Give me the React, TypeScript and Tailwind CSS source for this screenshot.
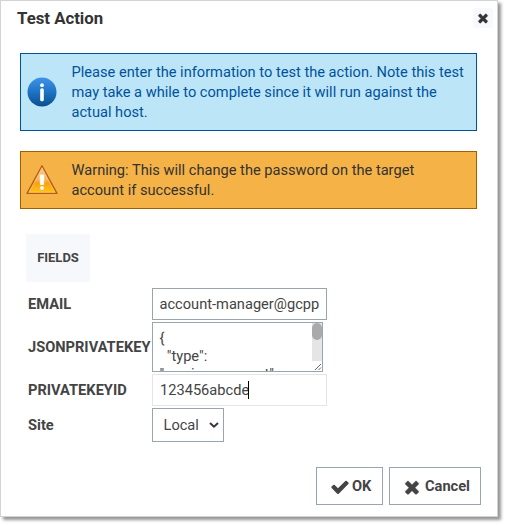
import React from "react";

const TimesIcon = ({ className }: { className: string }) => (
  <svg viewBox="0 0 1792 1792" fill="currentColor" stroke="currentColor" strokeWidth="40" className={className}>
    <path d="M1490 1322q0 40-28 68l-136 136q-28 28-68 28t-68-28l-294-294-294 294q-28 28-68 28t-68-28l-136-136q-28-28-28-68t28-68l294-294-294-294q-28-28-28-68t28-68l136-136q28-28 68-28t68 28l294 294 294-294q28-28 68-28t68 28l136 136q28 28 28 68t-28 68l-294 294 294 294q28 28 28 68z" />
  </svg>
);

const CheckIcon = ({ className }: { className: string }) => (
  <svg viewBox="0 0 1792 1792" fill="currentColor" className={className}>
    <path d="M1671 566q0 40-28 68l-724 724-136 136q-28 28-68 28t-68-28l-136-136-362-362q-28-28-28-68t28-68l136-136q28-28 68-28t68 28l294 295 656-657q28-28 68-28t68 28l136 136q28 28 28 68z" />
  </svg>
);

const InfoIcon = () => (
  <svg viewBox="0 0 30 30" className="size-[30px] shrink-0">
    <defs>
      <linearGradient id="info" x1="0" y1="0" x2="0" y2="1">
        <stop offset="0" stopColor="#3d94e8" />
        <stop offset="0.5" stopColor="#1f73c4" />
        <stop offset="1" stopColor="#0a4f8f" />
      </linearGradient>
    </defs>
    <circle cx="15" cy="15" r="14.5" fill="url(#info)" />
    <circle cx="15" cy="8.2" r="1.9" fill="#fff" />
    <rect x="13.2" y="11.3" width="3.6" height="13" rx="1.6" fill="#fff" />
  </svg>
);

const WarningIcon = () => (
  <svg viewBox="0 0 32 30" className="h-[30px] w-8 shrink-0">
    <defs>
      <linearGradient id="warn" x1="0" y1="0" x2="0" y2="1">
        <stop offset="0" stopColor="#f6c890" />
        <stop offset="0.5" stopColor="#f8b85a" />
        <stop offset="0.62" stopColor="#f9a010" />
        <stop offset="1" stopColor="#ffc61c" />
      </linearGradient>
    </defs>
    <path d="M16 0.8 L31 28.4 H1 Z" fill="url(#warn)" stroke="#b5591f" strokeWidth="1.3" strokeLinejoin="round" />
    <path d="M16 3.4 L28.8 27.2 H3.2 Z" fill="none" stroke="#fbd08a" strokeWidth="0.8" opacity="0.6" />
    <path d="M14.2 10 H17.8 L17.6 19.5 H14.4 Z" fill="#fff" stroke="#fff" strokeWidth="0.8" strokeLinejoin="round" />
    <circle cx="16" cy="23" r="1.9" fill="#fff" />
  </svg>
);

const Label = ({ children }: { children: React.ReactNode }) => (
  <label className="w-[124px] shrink-0 font-bold whitespace-nowrap">{children}</label>
);

export default function App() {
  return (
    <div className="h-[525px] w-[506px] overflow-hidden bg-white font-['Roboto',sans-serif] text-[14.64px] leading-5 text-[#444]">
      <section className="flex h-[517px] w-[498px] flex-col border border-[#d3d3d3] bg-white shadow-[3px_3px_3px_rgba(0,0,0,0.42)]">
        <header className="flex h-[52px] shrink-0 items-start justify-between pt-[7px] pr-[4px] pl-4">
          <h1 className="text-[16.8px] leading-[21px] font-bold text-[#333]">Test Action</h1>
          <button className="flex size-5 items-center justify-center rounded-xs bg-[#f8f9fc] text-[#333]">
            <TimesIcon className="size-[14px]" />
          </button>
        </header>

        <div className="ml-[19px] flex h-[78px] w-[457px] shrink-0 items-center border border-[#00529b] bg-[#bde5f8] pl-[6px] text-[#00529b]">
          <InfoIcon />
          <p className="ml-[14.5px] whitespace-nowrap">
            Please enter the information to test the action. Note this test
            <br />
            may take a while to complete since it will run against the
            <br />
            actual host.
          </p>
        </div>

        <div className="mt-5 ml-[19px] flex h-[58px] w-[457px] shrink-0 items-center border border-[#9f6000] bg-[#f5b247] pl-[5px] text-[#333]">
          <WarningIcon />
          <p className="ml-[13.5px] whitespace-nowrap">
            Warning: This will change the password on the target
            <br />
            account if successful.
          </p>
        </div>

        <div className="mt-[25px] ml-[25px] flex h-12 w-16 shrink-0 items-center justify-center bg-[#f6f8fb] text-[13px] font-bold">
          FIELDS
        </div>

        <form className="mt-[6px] ml-[27px] flex flex-col gap-[2px]">
          <div className="flex h-8 items-center">
            <Label>EMAIL</Label>
            <div className="h-8 w-[175px] overflow-hidden border border-[#98a4ae] px-[6.5px] leading-[30px] whitespace-nowrap">
              account-manager@gcpp
            </div>
          </div>
          <div className="flex h-[50px] items-center">
            <Label>JSONPRIVATEKEY</Label>
            <div className="flex h-[50px] w-[171px] overflow-hidden border border-[#98a4ae]">
              <pre className="flex-1 pt-[6px] pl-[6.5px] font-['Roboto',sans-serif] leading-[18px]">
                {'{\n  "type":\n"service_account",'}
              </pre>
              <div className="flex w-[10px] flex-col justify-between bg-[#e5e5e5]">
                <div className="h-[17px] rounded-full bg-[#aaa]" />
                <svg viewBox="0 0 10 10" className="size-[10px] bg-white">
                  <path d="M3 9 L9 3 M6.5 9 L9 6.5" stroke="#555" strokeWidth="0.9" />
                </svg>
              </div>
            </div>
          </div>
          <div className="flex h-8 items-center">
            <Label>PRIVATEKEYID</Label>
            <div className="flex h-8 w-[175px] items-center border border-[#e5e5e5] px-[7px]">
              123456abcde
              <span className="-ml-px h-[18px] w-px bg-black" />
            </div>
          </div>
          <div className="flex h-[34px] items-center">
            <Label>Site</Label>
            <div className="flex h-[34px] w-[72px] items-center justify-between border border-[#98a4ae] pr-[4px] pl-[10.5px]">
              Local
              <svg viewBox="0 0 10 6" className="h-[6px] w-[10px]">
                <path d="M1 1 L5 4.7 L9 1" fill="none" stroke="#333" strokeWidth="1.9" />
              </svg>
            </div>
          </div>
        </form>

        <footer className="mt-[25px] flex gap-[6px] pl-[315px] font-bold">
          <button className="flex h-[38px] w-[67px] items-center border border-[#98a4ae] pl-[13px]">
            <CheckIcon className="mt-[2px] size-5" />
            <span className="ml-[2px]">OK</span>
          </button>
          <button className="flex h-[38px] w-[92px] items-center border border-[#98a4ae] pl-3">
            <TimesIcon className="mt-[2px] size-5" />
            <span className="ml-[3px]">Cancel</span>
          </button>
        </footer>
      </section>
    </div>
  );
}
